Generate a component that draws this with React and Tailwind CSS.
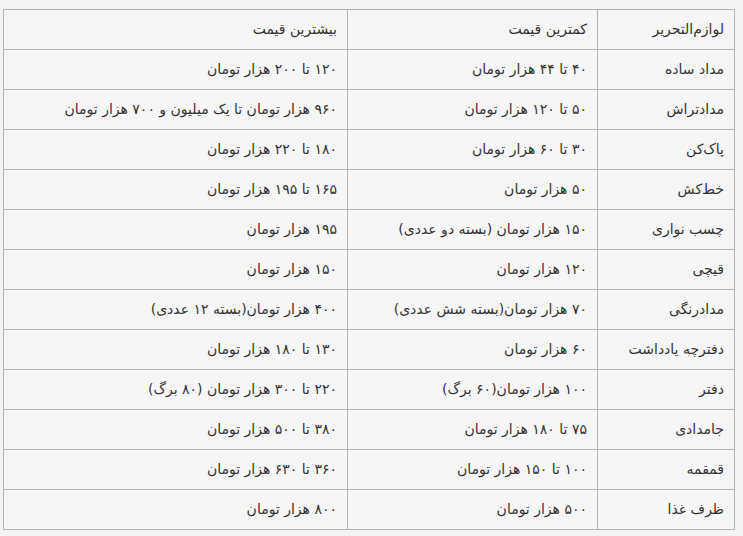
import React from 'react';

const rows = [
  ['مداد ساده', '۴۰ تا ۴۴ هزار تومان', '۱۲۰ تا ۲۰۰ هزار تومان'],
  ['مدادتراش', '۵۰ تا ۱۲۰ هزار تومان', '۹۶۰ هزار تومان تا یک میلیون و ۷۰۰ هزار تومان'],
  ['پاک‌کن', '۳۰ تا ۶۰ هزار تومان', '۱۸۰ تا ۲۲۰ هزار تومان'],
  ['خط‌کش', '۵۰ هزار تومان', '۱۶۵ تا ۱۹۵ هزار تومان'],
  ['چسب نواری', '۱۵۰ هزار تومان (بسته دو عددی)', '۱۹۵ هزار تومان'],
  ['قیچی', '۱۲۰ هزار تومان', '۱۵۰ هزار تومان'],
  ['مدادرنگی', '۷۰ هزار تومان(بسته شش عددی)', '۴۰۰ هزار تومان(بسته ۱۲ عددی)'],
  ['دفترچه یادداشت', '۶۰ هزار تومان', '۱۳۰ تا ۱۸۰ هزار تومان'],
  ['دفتر', '۱۰۰ هزار تومان(۶۰ برگ)', '۲۲۰ تا ۳۰۰ هزار تومان (۸۰ برگ)'],
  ['جامدادی', '۷۵ تا ۱۸۰ هزار تومان', '۳۸۰ تا ۵۰۰ هزار تومان'],
  ['قمقمه', '۱۰۰ تا ۱۵۰ هزار تومان', '۳۶۰ تا ۶۳۰ هزار تومان'],
  ['ظرف غذا', '۵۰۰ هزار تومان', '۸۰۰ هزار تومان'],
];

const cell = 'border border-[#b4b4b4] h-[40px] px-[10px] text-right align-middle font-normal';

const App = () => {
  return (
    <div className="min-h-screen bg-[#f4f4f4] pt-[9px] pl-[3px]" style={{ fontFamily: '"DejaVu Sans", sans-serif' }}>
      <table dir="rtl" className="w-[732px] border-collapse text-[14px] text-[#333] bg-[#f6f6f6]">
        <colgroup>
          <col className="w-[137px]" />
          <col className="w-[250px]" />
          <col />
        </colgroup>
        <thead>
          <tr>
            <th className={cell}>لوازم‌التحریر</th>
            <th className={cell}>کمترین قیمت</th>
            <th className={cell}>بیشترین قیمت</th>
          </tr>
        </thead>
        <tbody>
          {rows.map((r) => (
            <tr key={r[0]}>
              <td className={cell}>{r[0]}</td>
              <td className={cell}>{r[1]}</td>
              <td className={cell}>{r[2]}</td>
            </tr>
          ))}
        </tbody>
      </table>
    </div>
  );
};

export default App;
